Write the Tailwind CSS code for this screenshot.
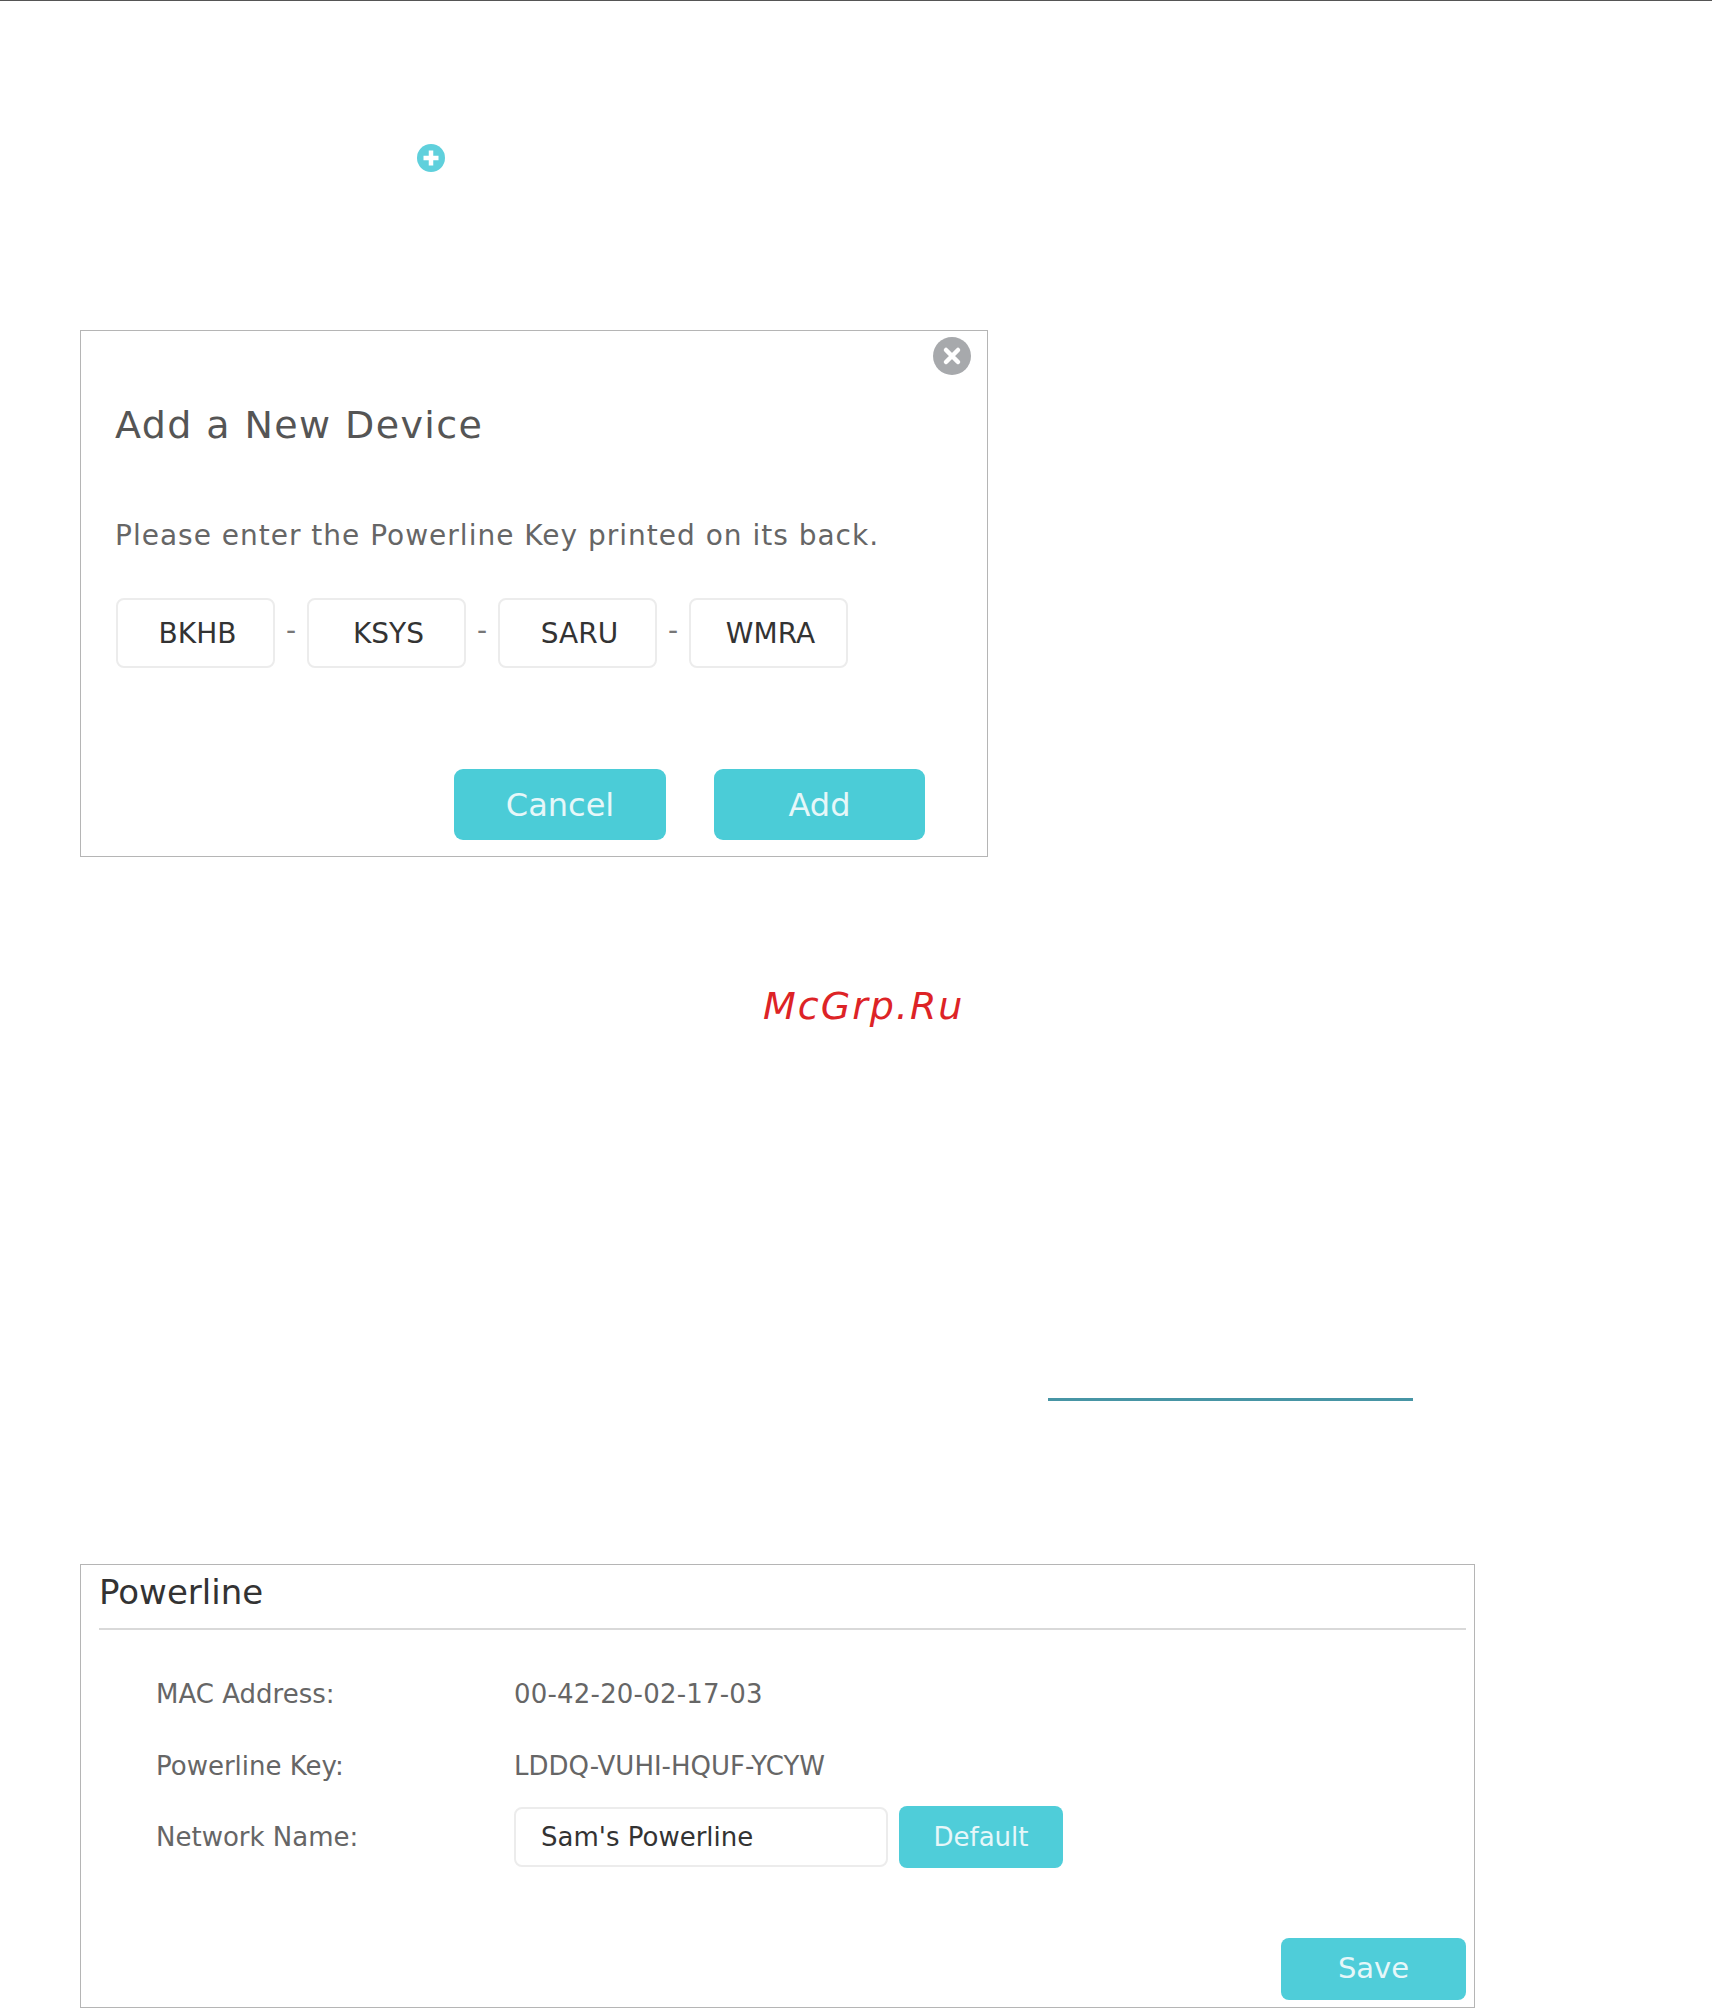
<!DOCTYPE html>
<html lang="en">
  <head>
    <meta charset="UTF-8" />
    <meta name="viewport" content="width=device-width, initial-scale=1.0" />
    <title>Add a New Device</title>
    <script src="https://cdn.jsdelivr.net/npm/@tailwindcss/browser@4"></script>
  </head>
  <body class="bg-white h-[2008px] overflow-hidden font-['DejaVu_Sans',sans-serif] text-[#555]">
    <div class="h-px bg-[#555]"></div>

    <!-- plus icon from the step text -->
    <svg class="ml-[417px] mt-[143px] w-[28px] h-[28px] block" viewBox="0 0 28 28">
      <circle cx="14" cy="14" r="14" fill="#5fd0dc" />
      <path d="M14 6.5v15M6.5 14h15" stroke="#fff" stroke-width="4.5" />
    </svg>

    <!-- Add device dialog -->
    <div class="relative ml-[80px] mt-[158px] w-[908px] h-[527px] border border-[#b5b5b5] pl-[34px]">
      <svg class="absolute top-[6px] right-[16px] w-[38px] h-[38px]" viewBox="0 0 38 38">
        <circle cx="19" cy="19" r="19" fill="#a7a9ac" />
        <path d="M13 13l12 12M25 13L13 25" stroke="#fff" stroke-width="4.5" stroke-linecap="round" />
      </svg>
      <h2 class="pt-[69px] h-[119px] text-[38px] leading-[50px] tracking-[1.4px] text-[#555]">Add a New Device</h2>
      <p class="mt-[66px] text-[28px] leading-[40px] tracking-[1px] text-[#666]">Please enter the Powerline Key printed on its back.</p>
      <div class="mt-[42px] ml-px flex items-center text-[28px] text-[#333]">
        <div class="w-[159px] h-[70px] flex items-center justify-center pl-[4px] pt-[2px] border-2 border-[#ececec] rounded-[8px]">BKHB</div>
        <span class="w-[32px] text-center text-[#777] -mt-[4px]">-</span>
        <div class="w-[159px] h-[70px] flex items-center justify-center pl-[4px] pt-[2px] border-2 border-[#ececec] rounded-[8px]">KSYS</div>
        <span class="w-[32px] text-center text-[#777] -mt-[4px]">-</span>
        <div class="w-[159px] h-[70px] flex items-center justify-center pl-[4px] pt-[2px] border-2 border-[#ececec] rounded-[8px]">SARU</div>
        <span class="w-[32px] text-center text-[#777] -mt-[4px]">-</span>
        <div class="w-[159px] h-[70px] flex items-center justify-center pl-[4px] pt-[2px] border-2 border-[#ececec] rounded-[8px]">WMRA</div>
      </div>
      <div class="mt-[101px] ml-[339px] flex gap-[48px] text-[32px] text-[#e6f7f9]">
        <div class="w-[212px] h-[71px] flex items-center justify-center bg-[#4bccd7] rounded-[9px]">Cancel</div>
        <div class="w-[211px] h-[71px] flex items-center justify-center bg-[#4bccd7] rounded-[9px]">Add</div>
      </div>
    </div>

    <!-- watermark -->
    <div class="ml-[763px] mt-[126px] text-[38px] leading-[46px] tracking-[2px] italic text-[#dd2326]">McGrp.Ru</div>

    <!-- link underline -->
    <div class="ml-[1048px] mt-[369px] w-[365px] h-[3px] bg-[#4795a5]"></div>

    <!-- Powerline settings panel -->
    <div class="ml-[80px] mt-[163px] w-[1395px] h-[444px] border border-[#b5b5b5] pl-[18px] pr-[8px]">
      <h3 class="h-[65px] pt-[6px] border-b-2 border-[#d9d9d9] text-[34px] leading-[42px] text-[#333]">Powerline</h3>
      <div class="pl-[57px] text-[26px] text-[#666]">
        <div class="mt-[46px] h-[36px] flex items-center">
          <span class="w-[358px]">MAC Address:</span>
          <span class="tracking-[0.2px]">00-42-20-02-17-03</span>
        </div>
        <div class="mt-[36px] h-[36px] flex items-center">
          <span class="w-[358px]">Powerline Key:</span>
          <span>LDDQ-VUHI-HQUF-YCYW</span>
        </div>
        <div class="mt-[22px] flex items-center">
          <span class="w-[358px]">Network Name:</span>
          <div class="w-[374px] h-[60px] flex items-center pl-[25px] border-2 border-[#ececec] rounded-[8px] text-[#333]">Sam's Powerline</div>
          <div class="ml-[11px] w-[164px] h-[62px] flex items-center justify-center bg-[#4fcdd9] rounded-[8px] text-[#e6f7f9]">Default</div>
        </div>
      </div>
      <div class="mt-[70px] flex justify-end">
        <div class="w-[185px] h-[62px] flex items-center justify-center bg-[#4fcdd9] rounded-[8px] text-[29px] text-[#e6f7f9]">Save</div>
      </div>
    </div>
  </body>
</html>
